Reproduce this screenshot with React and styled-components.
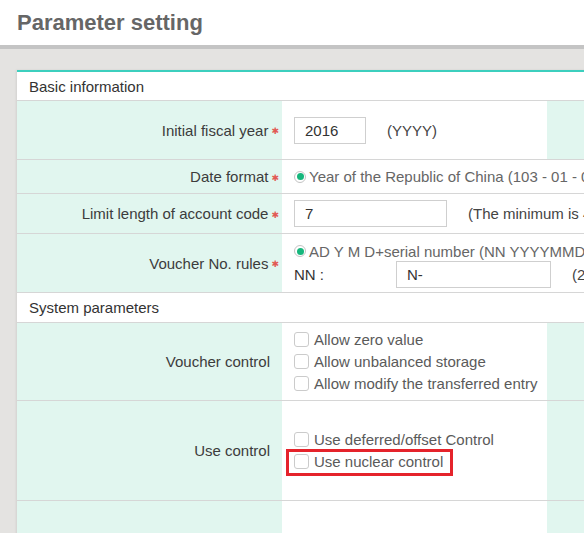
import React from 'react'
import styled, { createGlobalStyle } from 'styled-components'

const GlobalStyle = createGlobalStyle`
  html, body {
    margin: 0;
    padding: 0;
    background: #e4e3e1;
    overflow: hidden;
    font-family: "Liberation Sans", Arial, sans-serif;
  }
`

export default function App() {
  return (
    <>
      <GlobalStyle />
      <Header>
        <Title>Parameter setting</Title>
      </Header>
      <Content>
        <Card>
          <Section h={28}>Basic information</Section>

          <Row h={58}>
            <Label required>Initial fiscal year</Label>
            <Value>
              <Input w={72} defaultValue="2016" />
              <Hint>(YYYY)</Hint>
            </Value>
            <Label />
            <Value />
          </Row>

          <Row h={33}>
            <Label required>Date format</Label>
            <Value wide>
              <Radio checked />
              <Option>Year of the Republic of China (103 - 01 - 01)</Option>
            </Value>
          </Row>

          <Row h={39}>
            <Label required>Limit length of account code</Label>
            <Value wide>
              <Input w={153} defaultValue="7" />
              <Hint>(The minimum is 4, the maximum is 12)</Hint>
            </Value>
          </Row>

          <Row h={58}>
            <Label required>Voucher No. rules</Label>
            <Value wide top>
              <Stack>
                <Line>
                  <Radio checked />
                  <Option>AD Y M D+serial number (NN YYYYMMDD0001)</Option>
                </Line>
                <Line>
                  <FieldName>NN :</FieldName>
                  <Input w={155} defaultValue="N-" />
                  <Hint>(2 characters)</Hint>
                </Line>
              </Stack>
            </Value>
          </Row>

          <Section h={29}>System parameters</Section>

          <Row h={77}>
            <Label>Voucher control</Label>
            <Value>
              <Stack>
                <Check label="Allow zero value" />
                <Check label="Allow unbalanced storage" />
                <Check label="Allow modify the transferred entry" />
              </Stack>
            </Value>
            <Label />
            <Value />
          </Row>

          <Row h={99}>
            <Label>Use control</Label>
            <Value>
              <Stack>
                <Check label="Use deferred/offset Control" />
                <Check label="Use nuclear control" marked />
              </Stack>
            </Value>
            <Label />
            <Value />
          </Row>

          <Row h={60}>
            <Label />
            <Value />
            <Label />
            <Value />
          </Row>
        </Card>
      </Content>
    </>
  )
}

// components
const Label = ({ required, children }) => (
  <LabelCell>
    {children}
    {required && <Star>✱</Star>}
  </LabelCell>
)

const Radio = ({ checked }) => (
  <RadioRing>{checked && <RadioDot />}</RadioRing>
)

const Check = ({ label, marked }) => (
  <CheckLine>
    <Box />
    <CheckText>{label}</CheckText>
    {marked && <Highlight />}
  </CheckLine>
)

// style
const Header = styled.header`
  height: 45px;
  background: #fff;
  border-bottom: 4px solid #c4c4c4;
  padding-left: 17px;
`

const Title = styled.h1`
  margin: 0;
  font-size: 22px;
  line-height: 45px;
  font-weight: bold;
  color: #666;
`

const Content = styled.main`
  padding: 21px 0 0 17px;
`

const Card = styled.div`
  width: 1100px;
  background: #fff;
  border-top: 2px solid #3ccfbe;
  box-shadow: -1px 0 2px rgba(0, 0, 0, 0.08);
`

const Section = styled.div`
  height: ${({ h }) => h}px;
  line-height: ${({ h }) => h + 1}px;
  padding-left: 12px;
  font-size: 15px;
  color: #333;
  border-bottom: 1px solid #d6d6d6;
`

const Row = styled.div`
  display: grid;
  grid-template-columns: 265px 265px 265px 1fr;
  height: ${({ h }) => h}px;
  border-bottom: 1px solid #d6d6d6;
`

const LabelCell = styled.div`
  display: flex;
  align-items: center;
  justify-content: flex-end;
  padding-right: 12px;
  background: #e1f6ef;
  font-size: 15px;
  color: #3c3c3c;
  white-space: nowrap;
`

const Star = styled.span`
  margin: 2px -9px 0 3px;
  font-size: 9px;
  color: #e25a55;
  font-family: "DejaVu Sans", sans-serif;
`

const Value = styled.div`
  display: flex;
  align-items: ${({ top }) => (top ? 'flex-start' : 'center')};
  padding: ${({ top }) => (top ? '7px' : '0')} 0 0 12px;
  grid-column: ${({ wide }) => (wide ? 'span 3' : 'auto')};
  font-size: 15px;
  color: #444;
  white-space: nowrap;
  overflow: hidden;
`

const Input = styled.input`
  box-sizing: border-box;
  width: ${({ w }) => w}px;
  height: 27px;
  padding: 0 10px;
  border: 1px solid #cfcfcf;
  font-family: inherit;
  font-size: 15px;
  color: #333;
  outline: none;
`

const Hint = styled.span`
  margin-left: 21px;
  color: #444;
`

const Option = styled.span`
  color: #666;
`

const RadioRing = styled.span`
  box-sizing: border-box;
  display: inline-flex;
  align-items: center;
  justify-content: center;
  width: 12px;
  height: 12px;
  margin-right: 3px;
  border: 1px solid #c4c4c4;
  border-radius: 50%;
  background: #fff;
`

const RadioDot = styled.span`
  width: 7px;
  height: 7px;
  border-radius: 50%;
  background: #16b67c;
`

const Stack = styled.div`
  display: flex;
  flex-direction: column;
`

const Line = styled.div`
  display: flex;
  align-items: center;
  min-height: 20px;
`

const FieldName = styled.span`
  width: 102px;
  color: #333;
`

const CheckLine = styled.div`
  position: relative;
  display: flex;
  align-items: center;
  height: 22px;
`

const Box = styled.span`
  box-sizing: border-box;
  width: 15px;
  height: 15px;
  margin-right: 5px;
  border: 1px solid #cbcbcb;
  border-radius: 3px;
  background: #fff;
`

const CheckText = styled.span`
  color: #5a5a5a;
`

const Highlight = styled.span`
  position: absolute;
  left: -8px;
  top: -2px;
  width: 167px;
  height: 27px;
  box-sizing: border-box;
  border: 3px solid #e5232b;
  pointer-events: none;
`
